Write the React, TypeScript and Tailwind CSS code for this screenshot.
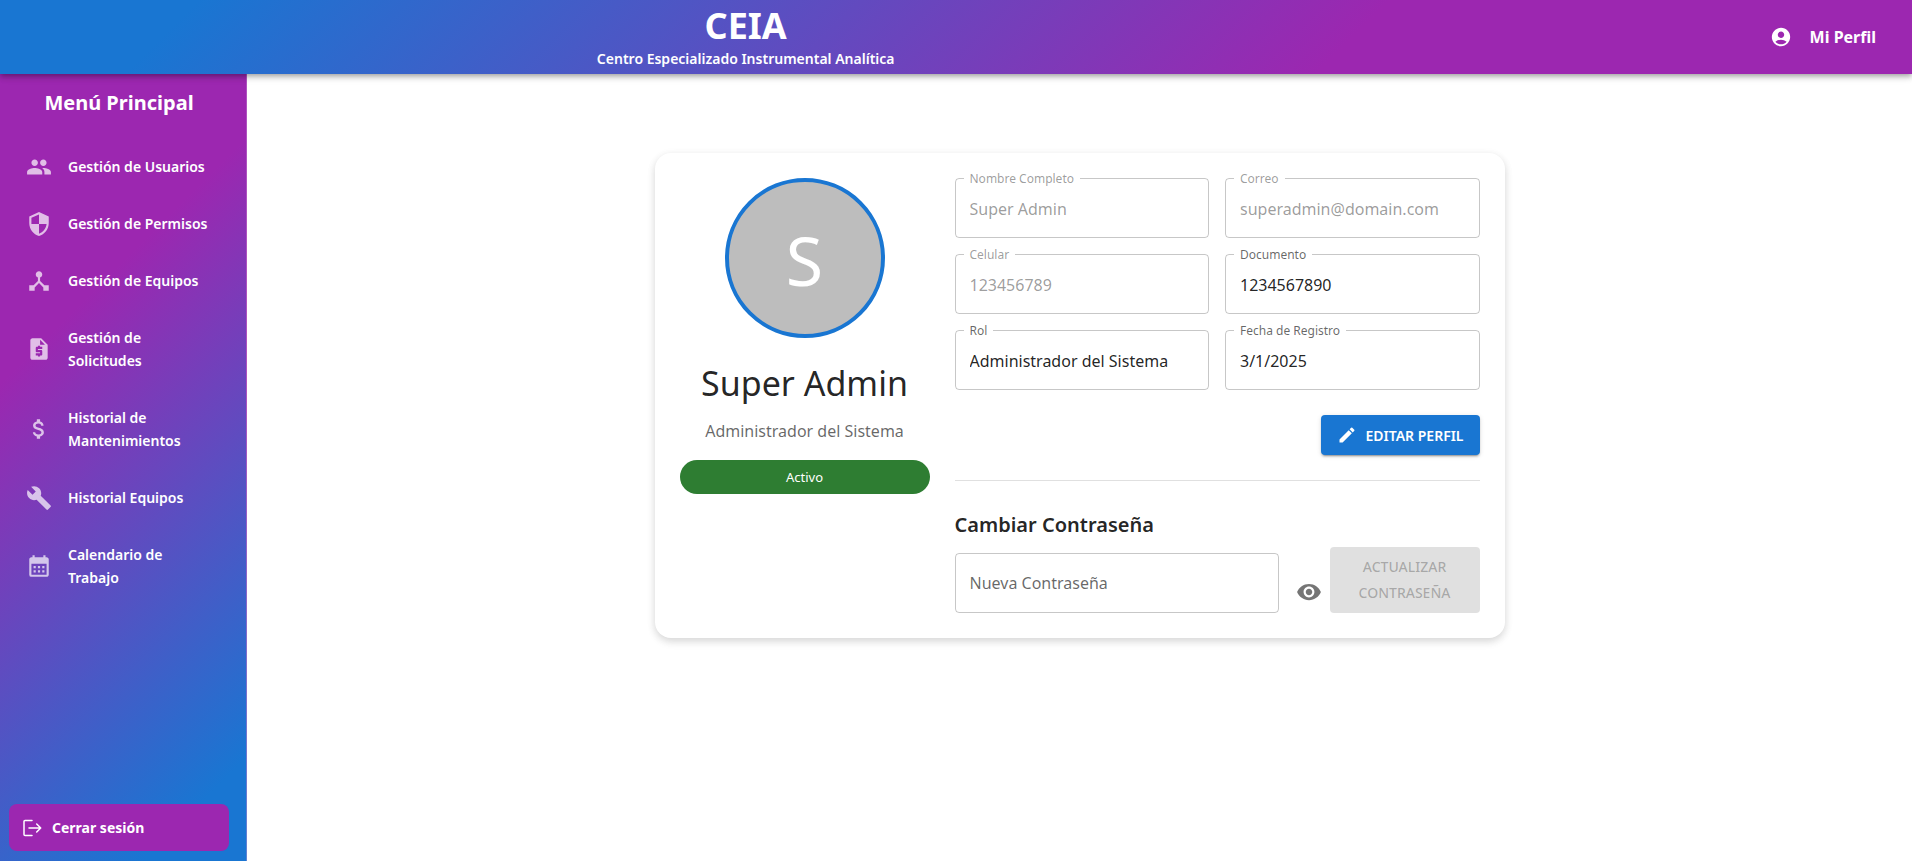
import type { ReactNode } from "react";
import type { IconType } from "react-icons";
import {
  MdAccountCircle,
  MdAttachMoney,
  MdBuild,
  MdCalendarMonth,
  MdDeviceHub,
  MdEdit,
  MdPeople,
  MdRequestQuote,
  MdSecurity,
  MdVisibility,
} from "react-icons/md";

const menu: { label: string; icon: IconType }[] = [
  { label: "Gestión de Usuarios", icon: MdPeople },
  { label: "Gestión de Permisos", icon: MdSecurity },
  { label: "Gestión de Equipos", icon: MdDeviceHub },
  { label: "Gestión de Solicitudes", icon: MdRequestQuote },
  { label: "Historial de Mantenimientos", icon: MdAttachMoney },
  { label: "Historial Equipos", icon: MdBuild },
  { label: "Calendario de Trabajo", icon: MdCalendarMonth },
];

const fields = [
  { id: "nombre", label: "Nombre Completo", value: "Super Admin", disabled: true },
  { id: "correo", label: "Correo", value: "superadmin@domain.com", disabled: true },
  { id: "celular", label: "Celular", value: "123456789", disabled: true },
  { id: "documento", label: "Documento", value: "1234567890", disabled: false },
  { id: "rol", label: "Rol", value: "Administrador del Sistema", disabled: false },
  { id: "fecha", label: "Fecha de Registro", value: "3/1/2025", disabled: false },
];

function LogoutIcon() {
  return (
    <svg width="20" height="18" viewBox="0 0 20 18" fill="none" stroke="currentColor" strokeWidth="1.5" strokeLinecap="round" strokeLinejoin="round" aria-hidden="true">
      <path d="M10 1.500H3a1 1 0 0 0-1 1v13a1 1 0 0 0 1 1h7M7 9h11.500M14.700 5l4 4-4 4" />
    </svg>
  );
}

function Header() {
  return (
    <header className="relative z-10 grid h-[74px] shrink-0 grid-cols-[78%_1fr] items-center bg-[linear-gradient(135deg,#1976d2_10%,#9c27b0_70%)] text-white shadow-[0_2px_4px_-1px_rgba(0,0,0,0.2),0_4px_5px_rgba(0,0,0,0.14),0_1px_10px_rgba(0,0,0,0.12)]">
      <div className="text-center">
        <h1 className="text-[36px] leading-[44px] font-bold">CEIA</h1>
        <p className="text-[14px] leading-[22px] font-semibold">Centro Especializado Instrumental Analítica</p>
      </div>
      <a href="#perfil" className="flex items-center justify-end gap-[18px] pr-9 text-[16px] font-bold">
        <MdAccountCircle size={22} />
        Mi Perfil
      </a>
    </header>
  );
}

function Sidebar() {
  return (
    <aside className="flex w-[247px] shrink-0 flex-col border-r border-white/20 bg-[linear-gradient(135deg,#9c27b0_30%,#1976d2_90%)] text-white">
      <h2 className="pt-4 pr-2 pb-[22px] text-center text-[20px] leading-[26px] font-bold">Menú Principal</h2>
      <nav className="grow">
        {menu.map(({ label, icon: Icon }) => (
          <a key={label} href="#menu" className="flex items-center gap-4 py-[17px] pr-8 pl-[26px]">
            <Icon size={26} className="-my-1 shrink-0 text-white/70" />
            <span className="text-[14px] leading-[23px] font-semibold">{label}</span>
          </a>
        ))}
      </nav>
      <button type="button" className="mr-[17px] mb-[10px] ml-[9px] flex h-[47px] items-center gap-[10px] rounded-lg bg-[#9c27b0] px-[13px] text-[14px] font-bold">
        <LogoutIcon />
        Cerrar sesión
      </button>
    </aside>
  );
}

function Outlined({ id, label, disabled, children }: { id: string; label: string; disabled: boolean; children: ReactNode }) {
  return (
    <div className="relative">
      <label htmlFor={id} className={`absolute -top-2 left-[9px] bg-white px-[6px] text-[12px] leading-[18px] ${disabled ? "text-black/40" : "text-black/60"}`}>
        {label}
      </label>
      {children}
    </div>
  );
}

function ProfileCard() {
  return (
    <section className="flex w-full max-w-[850px] gap-[25px] rounded-2xl bg-white p-[25px] shadow-[0_4px_8px_rgba(0,0,0,0.1),0_2px_8px_rgba(0,0,0,0.08)]">
      <div className="flex w-[250px] shrink-0 flex-col items-center">
        <div className="flex size-40 items-center justify-center rounded-full border-4 border-[#1976d2] bg-[#bdbdbd] pt-1 text-[68px] leading-none text-white">
          S
        </div>
        <h2 className="mt-5 text-[34px] leading-[50px] text-black/87">Super Admin</h2>
        <p className="mt-[10px] text-[16px] leading-[26px] text-black/60">Administrador del Sistema</p>
        <span className="mt-4 flex h-[34px] w-full items-center justify-center rounded-full bg-[#2e7d32] pt-0.5 text-[13px] text-white">
          Activo
        </span>
      </div>

      <div className="min-w-0 grow">
        <form className="grid grid-cols-2 gap-x-4 gap-y-4">
          {fields.map((f) => (
            <Outlined key={f.id} id={f.id} label={f.label} disabled={f.disabled}>
              <input
                id={f.id}
                defaultValue={f.value}
                disabled={f.disabled}
                readOnly={!f.disabled}
                className="block h-[60px] w-full rounded-[4px] border border-black/22 px-[14px] pt-0.5 text-[16px] text-black/87 disabled:text-black/40"
              />
            </Outlined>
          ))}
        </form>
        <div className="mt-[25px] flex justify-end border-b border-black/12 pb-[25px]">
          <button type="button" className="flex h-10 items-center gap-2 rounded-[4px] bg-[#1976d2] px-4 text-[14px] font-semibold text-white shadow-[0_3px_1px_-2px_rgba(0,0,0,0.2),0_2px_2px_rgba(0,0,0,0.14),0_1px_5px_rgba(0,0,0,0.12)]">
            <MdEdit size={20} />
            EDITAR PERFIL
          </button>
        </div>
        <h3 className="mt-[30px] text-[20px] leading-[28px] font-semibold text-black/87">Cambiar Contraseña</h3>
        <form className="mt-2 flex items-end">
          <input
            type="password"
            aria-label="Nueva Contraseña"
            placeholder="Nueva Contraseña"
            className="h-[60px] min-w-0 grow rounded-[4px] border border-black/22 px-[14px] text-[16px] placeholder:text-black/60"
          />
          <button type="button" aria-label="Mostrar contraseña" className="ml-[17px] pb-2 text-black/54">
            <MdVisibility size={26} />
          </button>
          <button type="button" disabled className="ml-2 h-[66px] w-[150px] shrink-0 rounded-[4px] bg-black/12 px-4 text-[14px] leading-[26px] font-medium text-black/26">
            ACTUALIZAR CONTRASEÑA
          </button>
        </form>
      </div>
    </section>
  );
}

export default function App() {
  return (
    <div className="flex min-h-screen flex-col bg-white font-['Noto_Sans','Open_Sans',sans-serif]">
      <Header />
      <div className="flex grow">
        <Sidebar />
        <main className="flex min-w-0 grow items-start justify-center px-6 pt-[79px]">
          <ProfileCard />
        </main>
      </div>
    </div>
  );
}
